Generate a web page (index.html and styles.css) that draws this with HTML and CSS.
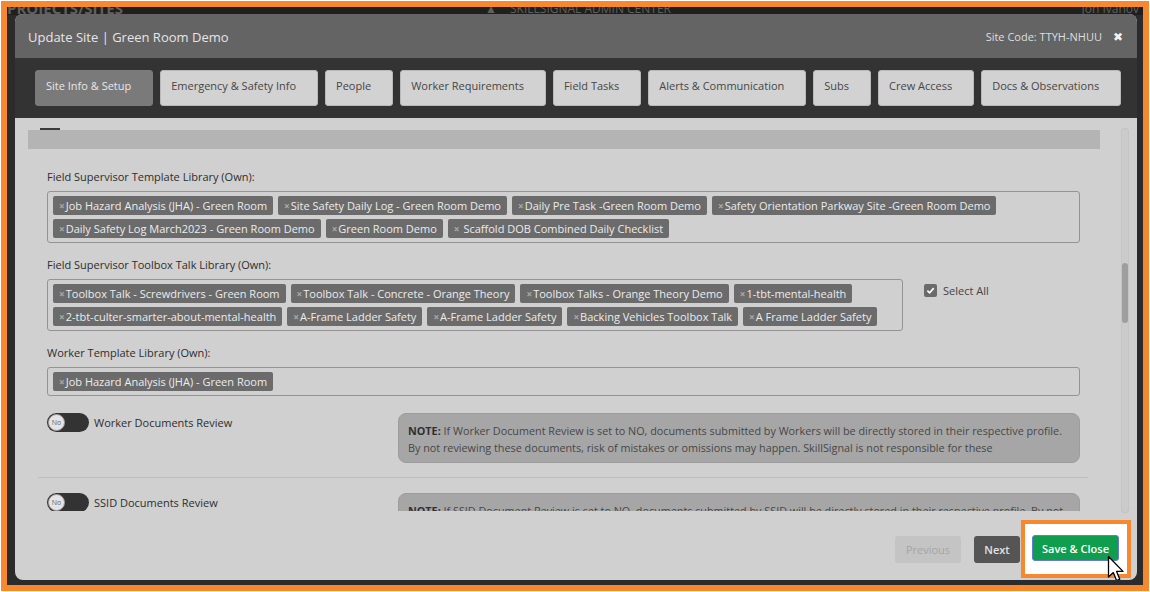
FILE: index.html
```html
<!DOCTYPE html>
<html lang="en">
<head>
    <meta charset="UTF-8">
    <meta name="viewport" content="width=device-width, initial-scale=1.0">
    <title>Update Site | Green Room Demo</title>
    <link rel="stylesheet" href="styles.css">
</head>
<body>

<div class="frame">
    <div class="backdrop">

        <!-- page underneath the overlay -->
        <div class="page-behind">
            <div class="behind-top">
                <span class="behind-title">PROJECTS/SITES</span>
                <span class="behind-icon">&#9650;</span>
                <span class="behind-center">SKILLSIGNAL ADMIN CENTER</span>
                <span class="behind-user">Jon Ivanov</span>
            </div>
        </div>

        <div class="modal">
            <div class="modal-header">
                <span class="modal-title">Update Site | Green Room Demo</span>
                <span class="site-code">Site Code: TTYH-NHUU</span>
                <span class="close-btn">&#10006;</span>
            </div>

            <div class="tab-bar">
                <div class="tab active">Site Info &amp; Setup</div>
                <div class="tab">Emergency &amp; Safety Info</div>
                <div class="tab">People</div>
                <div class="tab">Worker Requirements</div>
                <div class="tab">Field Tasks</div>
                <div class="tab">Alerts &amp; Communication</div>
                <div class="tab">Subs</div>
                <div class="tab">Crew Access</div>
                <div class="tab">Docs &amp; Observations</div>
            </div>

            <div class="modal-body">
                <div class="scroll-content">
                    <div class="cut-toggle"></div>
                    <div class="section-bar"></div>

                    <div class="fields">
                        <!-- Field Supervisor Template Library -->
                        <label class="field-label first">Field Supervisor Template Library (Own):</label>
                        <div class="tag-box">
                            <span class="tag"><i>&times;</i>Job Hazard Analysis (JHA) - Green Room</span>
                            <span class="tag"><i>&times;</i>Site Safety Daily Log - Green Room Demo</span>
                            <span class="tag"><i>&times;</i>Daily Pre Task -Green Room Demo</span>
                            <span class="tag"><i>&times;</i>Safety Orientation Parkway Site -Green Room Demo</span>
                            <span class="tag"><i>&times;</i>Daily Safety Log March2023 - Green Room Demo</span>
                            <span class="tag"><i>&times;</i>Green Room Demo</span>
                            <span class="tag"><i>&times;</i> Scaffold DOB Combined Daily Checklist</span>
                        </div>

                        <!-- Field Supervisor Toolbox Talk Library -->
                        <label class="field-label">Field Supervisor Toolbox Talk Library (Own):</label>
                        <div class="box-row">
                            <div class="tag-box narrow">
                                <span class="tag"><i>&times;</i>Toolbox Talk - Screwdrivers - Green Room</span>
                                <span class="tag"><i>&times;</i>Toolbox Talk - Concrete - Orange Theory</span>
                                <span class="tag"><i>&times;</i>Toolbox Talks - Orange Theory Demo</span>
                                <span class="tag"><i>&times;</i>1-tbt-mental-health</span>
                                <span class="tag"><i>&times;</i>2-tbt-culter-smarter-about-mental-health</span>
                                <span class="tag"><i>&times;</i>A-Frame Ladder Safety</span>
                                <span class="tag"><i>&times;</i>A-Frame Ladder Safety</span>
                                <span class="tag"><i>&times;</i>Backing Vehicles Toolbox Talk</span>
                                <span class="tag"><i>&times;</i>A Frame Ladder Safety</span>
                            </div>
                            <div class="select-all">
                                <span class="checkbox">
                                    <svg width="9" height="9" viewBox="0 0 10 10"><path d="M1.5 5.2 L4 7.6 L8.6 2.4" fill="none" stroke="#fff" stroke-width="1.8"/></svg>
                                </span>
                                <span>Select All</span>
                            </div>
                        </div>

                        <!-- Worker Template Library -->
                        <label class="field-label">Worker Template Library (Own):</label>
                        <div class="tag-box">
                            <span class="tag"><i>&times;</i>Job Hazard Analysis (JHA) - Green Room</span>
                        </div>

                        <!-- Worker Documents Review -->
                        <div class="review-row first-review">
                            <div class="review-left">
                                <span class="toggle"><span class="knob">No</span></span>
                                <span class="review-label">Worker Documents Review</span>
                            </div>
                            <p class="note"><b>NOTE:</b> If Worker Document Review is set to NO, documents submitted by Workers will be directly stored in their respective profile.<br>By not reviewing these documents, risk of mistakes or omissions may happen. SkillSignal is not responsible for these</p>
                        </div>
                    </div>

                    <div class="divider"></div>

                    <div class="fields">
                        <!-- SSID Documents Review -->
                        <div class="review-row">
                            <div class="review-left">
                                <span class="toggle"><span class="knob">No</span></span>
                                <span class="review-label">SSID Documents Review</span>
                            </div>
                            <p class="note"><b>NOTE:</b> If SSID Document Review is set to NO, documents submitted by SSID will be directly stored in their respective profile. By not<br>reviewing these documents, risk of mistakes or omissions may happen. SkillSignal is not responsible for these</p>
                        </div>
                    </div>
                </div>

                <div class="scroll-track">
                    <div class="scroll-thumb"></div>
                </div>
            </div>

            <div class="modal-footer">
                <button type="button" class="btn btn-prev" disabled>Previous</button>
                <button type="button" class="btn btn-next">Next</button>
                <span class="highlight">
                    <button type="button" class="btn btn-save">Save &amp; Close</button>
                    <svg class="cursor" width="19" height="28" viewBox="0 0 19 28">
                        <path d="M1.5 1.5 L1.5 22 L6.3 17.6 L9.6 25.6 L12.8 24.2 L9.6 16.4 L16 16.4 Z" fill="#fff" stroke="#000" stroke-width="1.3" stroke-linejoin="round"/>
                    </svg>
                </span>
            </div>
        </div>

    </div>
</div>

</body>
</html>
```

FILE: styles.css
```css
body {
    font-family: "Open Sans", "Liberation Sans", sans-serif;
    background-color: #ffffff;
    margin: 0;
    padding: 0;
}

.frame {
    margin: 1px;
    border: 6px solid #f7882e;
    height: 578px;
}

.backdrop {
    display: grid;
    height: 100%;
    background-color: #2b2b2b;
    overflow: hidden;
}

.page-behind,
.modal {
    grid-area: 1 / 1;
}

/* page under the overlay, only its edges show */
.page-behind {
    overflow: hidden;
}

.behind-top {
    display: flex;
    align-items: center;
    height: 14px;
    margin-top: -6px;
    padding: 0 4px 0 0;
    background-color: #1f1f1f;
    color: #5f5f5f;
    font-size: 15px;
    font-weight: 700;
}

.behind-title {
    width: 478px;
}

.behind-icon {
    font-size: 12px;
    width: 25px;
}

.behind-center {
    font-size: 12px;
    font-weight: 400;
    flex: 1;
}

.behind-user {
    font-size: 12px;
    font-weight: 400;
}

/* modal */
.modal {
    margin: 7px 6px 5px 8px;
    display: flex;
    flex-direction: column;
    border-radius: 8px;
    overflow: hidden;
    background-color: #d0d0d0;
}

.modal-header {
    height: 44px;
    display: flex;
    align-items: center;
    padding: 1px 14px 0 13px;
    box-sizing: border-box;
    background-color: #646464;
    color: #e6e6e6;
}

.modal-title {
    font-size: 13px;
    flex: 1;
}

.site-code {
    font-size: 11px;
    color: #dedede;
}

.close-btn {
    font-family: "DejaVu Sans", sans-serif;
    font-size: 12px;
    color: #f2f2f2;
    margin-left: 11px;
}

.tab-bar {
    height: 60px;
    box-sizing: border-box;
    display: flex;
    gap: 7px;
    padding: 12px 20px 0;
    background-color: #333333;
}

.tab {
    height: 36px;
    box-sizing: border-box;
    padding: 7px 21px 0 10px;
    font-size: 11px;
    line-height: 16px;
    color: #464646;
    background-color: #d2d2d2;
    border: 1px solid #b9b9b9;
    border-radius: 3px;
    white-space: nowrap;
}

.tab.active {
    background-color: #7a7a7a;
    border-color: #7a7a7a;
    color: #e8e8e8;
}

/* body */
.modal-body {
    height: 393px;
    display: flex;
}

.scroll-content {
    flex: 1;
    overflow: hidden;
    padding-left: 13px;
    margin-right: 21px;
}

.cut-toggle {
    width: 20px;
    height: 2px;
    margin: 10px 0 0 12px;
    background-color: #3a3a3a;
}

.section-bar {
    height: 19px;
    background-color: #b4b4b4;
}

.fields {
    padding: 0 20px 0 19px;
}

.field-label {
    display: block;
    font-size: 11px;
    line-height: 17px;
    color: #2e2e2e;
    margin: 12px 0 6px;
}

.field-label.first {
    margin-top: 19px;
}

.field-label + .tag-box + .field-label,
.box-row + .field-label {
    margin-top: 13px;
}

.tag-box {
    display: flex;
    flex-wrap: wrap;
    gap: 4px 5px;
    padding: 4px 5px;
    border: 1px solid #949494;
    border-radius: 3px;
}

.box-row {
    display: flex;
    align-items: flex-start;
}

.tag-box.narrow {
    width: 844px;
    flex: none;
}

.tag {
    height: 19px;
    line-height: 19px;
    padding: 0 6px 0 6px;
    font-size: 11px;
    color: #ececec;
    background-color: #6b6b6b;
    border-radius: 2px;
    white-space: nowrap;
}

.tag i {
    font-style: normal;
    font-size: 10px;
    font-weight: 700;
    color: #a9a9a9;
    margin-right: 1px;
}

.select-all {
    display: flex;
    align-items: center;
    gap: 6px;
    margin: 4px 0 0 21px;
    font-size: 11px;
    color: #444444;
}

.checkbox {
    width: 13px;
    height: 13px;
    display: flex;
    align-items: center;
    justify-content: center;
    background-color: #6b6b6b;
    border-radius: 2px;
}

.review-row {
    display: flex;
    align-items: flex-start;
}

.first-review {
    margin-top: 17px;
}

.review-left {
    flex: 1;
    display: flex;
    align-items: center;
    gap: 5px;
}

.toggle {
    width: 42px;
    height: 19px;
    box-sizing: border-box;
    padding: 1px;
    display: flex;
    background-color: #333333;
    border-radius: 10px;
}

.knob {
    width: 17px;
    height: 17px;
    box-sizing: border-box;
    border: 1px solid #9a9a9a;
    border-radius: 50%;
    background-color: #e4e4e4;
    color: #666666;
    font-size: 7px;
    line-height: 15px;
    text-align: center;
}

.review-label {
    font-size: 11px;
    color: #2e2e2e;
    margin-top: -1px;
}

.note {
    width: 682px;
    margin: 0;
    box-sizing: border-box;
    padding: 8px 9px 6px;
    font-size: 10.8px;
    line-height: 17px;
    color: #474747;
    background-color: #a6a6a6;
    border: 1px solid #9c9c9c;
    border-radius: 8px;
    white-space: nowrap;
    overflow: hidden;
}

.note b {
    color: #303030;
}

.divider {
    height: 1px;
    margin: 14px 12px 15px 10px;
    background-color: #bdbdbd;
}

.scroll-track {
    width: 6px;
    margin: 10px 8px 0 0;
    height: 383px;
    border: 1px solid #c4c4c4;
    border-radius: 3px;
    background-color: #cbcbcb;
}

.scroll-thumb {
    height: 60px;
    margin-top: 134px;
    background-color: #9e9e9e;
    border-radius: 3px;
}

/* footer */
.modal-footer {
    flex: 1;
    display: flex;
    align-items: center;
    justify-content: flex-end;
    padding: 7px 6px 0 0;
}

.btn {
    font-family: "Open Sans", "Liberation Sans", sans-serif;
    font-size: 11px;
    border: none;
    border-radius: 3px;
    height: 27px;
}

.btn-prev {
    width: 66px;
    background-color: #c4c4c4;
    color: #a4a4a4;
}

.btn-next {
    width: 46px;
    margin-left: 13px;
    background-color: #555555;
    color: #e2e2e2;
    font-weight: 600;
}

.highlight {
    position: relative;
    display: flex;
    margin-left: 1px;
    padding: 11px 8px 13px 7px;
    border: 4px solid #f7882e;
    background-color: #ffffff;
}

.btn-save {
    width: 87px;
    height: 26px;
    background-color: #0f9d4e;
    border: 1px solid #6a78d8;
    color: #ffffff;
    font-weight: 600;
}

.cursor {
    position: absolute;
    left: 82px;
    top: 31px;
}
```
